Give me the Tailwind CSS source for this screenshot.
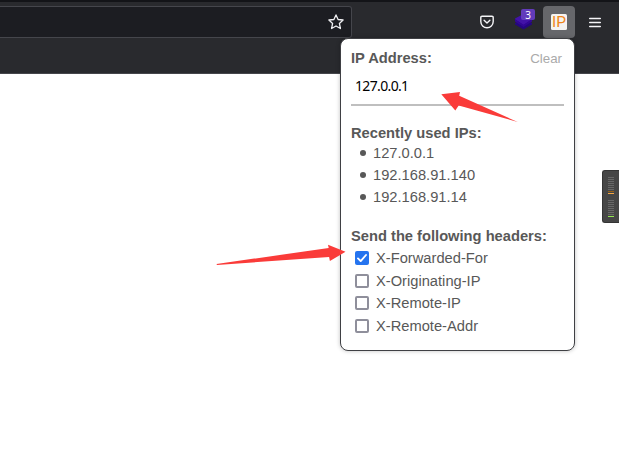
<!DOCTYPE html>
<html lang="en">
<head>
<meta charset="utf-8">
<title>IP Address</title>
<script src="https://cdn.jsdelivr.net/npm/@tailwindcss/browser@4"></script>
</head>
<body class="relative h-[456px] w-[619px] overflow-hidden bg-white font-['Liberation_Sans',Arial,sans-serif] text-[14.7px] text-[#585858]">
<header class="h-[74px] border-b border-[#45464b] bg-[#292a2e]">
  <div class="flex h-[38px] border-t-2 border-[#131418]">
    <div class="mt-1 flex h-8 w-[352px] shrink-0 items-center justify-end rounded-r-[3px] border border-l-0 border-[#45464c] bg-[#1c1d22] pr-[7px]">
      <svg class="size-4" viewBox="0 0 16 16" fill="none" stroke="#f0f0f3" stroke-width="1.3" stroke-linejoin="round"><path d="M8 .9l2.1 4.6 5 .5-3.7 3.4 1 5.1L8 12l-4.4 2.5 1-5.1L.9 6l5-.5z"/></svg>
    </div>
    <div class="mt-1 flex h-8 flex-1 items-center">
      <svg class="ml-[128px] h-[14px] w-[14px]" viewBox="0 0 14 14" fill="none" stroke="#f5f5f8" stroke-width="1.4" stroke-linecap="round" stroke-linejoin="round"><path d="M2 1.2h10a1.2 1.2 0 0 1 1.2 1.2v4.2a6.2 6.2 0 0 1-12.4 0V2.4A1.2 1.2 0 0 1 2 1.2z"/><path d="M4.1 5.3L7 8l2.9-2.7"/></svg>
      <div class="relative ml-[21px] h-8 w-5">
        <svg class="absolute top-[7px] left-0 h-[17px] w-[17px]" viewBox="0 0 17 17"><path d="M0 10l8.5-4 8.5 4v1.6l-8.5 5L0 11.6z" fill="#25077e"/><path d="M0 5.4L8.5 1 17 5.4v1L8.5 12 0 6.4z" fill="#4213a8"/><path d="M0 6.2l8.5 5.6L17 6.2v2.4L8.5 14 0 8.6z" fill="#320696"/></svg>
        <span class="absolute top-[3px] left-[6px] flex h-[11px] w-[14px] items-center justify-center rounded-[2px] bg-[#623bbb] font-['Noto_Sans',sans-serif] text-[10px] leading-none text-white">3</span>
      </div>
      <div class="ml-2 flex h-8 w-8 items-center justify-center rounded-[4px] bg-[#66676b]">
        <svg class="h-4 w-4" viewBox="0 0 16 16"><rect width="16" height="16" rx="1.5" fill="#f5f3f1"/><text x="1" y="13.3" textLength="14" lengthAdjust="spacingAndGlyphs" font-family="Roboto, sans-serif" font-size="15.5" fill="#ef861c">IP</text></svg>
      </div>
      <svg class="ml-[14px] h-[11px] w-3" viewBox="0 0 12 11" stroke="#f5f5f8" stroke-width="1.3" stroke-linecap="round"><path d="M.6 1.5h10.8M.6 5.5h10.8M.6 9.5h10.8"/></svg>
    </div>
  </div>
</header>

<aside class="absolute top-[170px] right-0 flex h-[53px] w-[17px] flex-col items-center rounded-l-[3px] border border-r-0 border-[#343434] bg-[#464646] pt-[6px]">
  <svg class="h-[41px] w-[6px]" viewBox="0 0 6 41" fill="#686868" shape-rendering="crispEdges"><path d="M0 0h6v1H0zM0 2h6v1H0zM0 4h6v1H0zM0 6h6v1H0zM0 8h6v1H0zM0 10h6v1H0zM0 12h6v1H0zM0 23h6v1H0zM0 25h6v1H0zM0 27h6v1H0zM0 29h6v1H0zM0 31h6v1H0zM0 33h6v1H0zM0 35h6v1H0zM0 37h6v1H0z"/><path d="M0 14h6v1H0z" fill="#956018"/><path d="M0 16h6v1H0z" fill="#f5a742"/><path d="M0 39h6v1H0z" fill="#93e851"/></svg>
</aside>

<main class="absolute top-[38px] left-[340px] h-[313px] w-[235px] rounded-[8px] border border-[#3f4044] bg-white px-[10px] pt-[11px] shadow-[0_0_4px_rgba(0,0,0,0.25)]">
  <div class="flex h-[17px] items-start justify-between leading-[17px]">
    <label for="ip" class="font-bold">IP Address:</label>
    <button class="pr-[2px] text-[13.33px] text-[#aaaaaa]">Clear</button>
  </div>
  <input id="ip" value="127.0.0.1" class="block h-[39px] w-full border-b-2 border-[#bfbfbf] pr-[5px] pb-px pl-1 font-['Noto_Sans',sans-serif] text-[14px] tracking-[-0.65px] text-black outline-none">
  <h2 class="mt-[18px] h-[18px] leading-[18px] font-bold">Recently used IPs:</h2>
  <ul class="list-none leading-[22px]">
    <li class="flex items-center gap-[7px] pl-[9px]"><i class="size-[6px] rounded-full bg-[#585858]"></i>127.0.0.1</li>
    <li class="flex items-center gap-[7px] pl-[9px]"><i class="size-[6px] rounded-full bg-[#585858]"></i>192.168.91.140</li>
    <li class="flex items-center gap-[7px] pl-[9px]"><i class="size-[6px] rounded-full bg-[#585858]"></i>192.168.91.14</li>
  </ul>
  <h2 class="mt-[19px] h-[18px] leading-[18px] font-bold">Send the following headers:</h2>
  <div class="flex flex-col pt-[2px] pl-1 leading-[22.6px]">
    <label class="flex items-center gap-[7px]"><svg class="size-[14px]" viewBox="0 0 14 14"><rect width="14" height="14" rx="2" fill="#2574ef"/><path d="M3 7.4l2.7 2.7L11 4" fill="none" stroke="#fff" stroke-width="1.9" stroke-linecap="round" stroke-linejoin="round"/></svg>X-Forwarded-For</label>
    <label class="flex items-center gap-[7px]"><span class="size-[14px] rounded-[2px] border-2 border-[#8f8f9b]"></span>X-Originating-IP</label>
    <label class="flex items-center gap-[7px]"><span class="size-[14px] rounded-[2px] border-2 border-[#8f8f9b]"></span>X-Remote-IP</label>
    <label class="flex items-center gap-[7px]"><span class="size-[14px] rounded-[2px] border-2 border-[#8f8f9b]"></span>X-Remote-Addr</label>
  </div>
</main>

<svg class="pointer-events-none absolute inset-0 h-[456px] w-[619px]" viewBox="0 0 619 456" fill="#fa3b39"><path d="M441.3 94.2L460 92l-.8 3.7L517.7 122l-59-16.5-3.4 5z"/><path d="M216.5 264l112.2-16-.7-3.2 17.5 7-15.6 9.3-.8-4.2L217 265z"/></svg>
</body>
</html>
